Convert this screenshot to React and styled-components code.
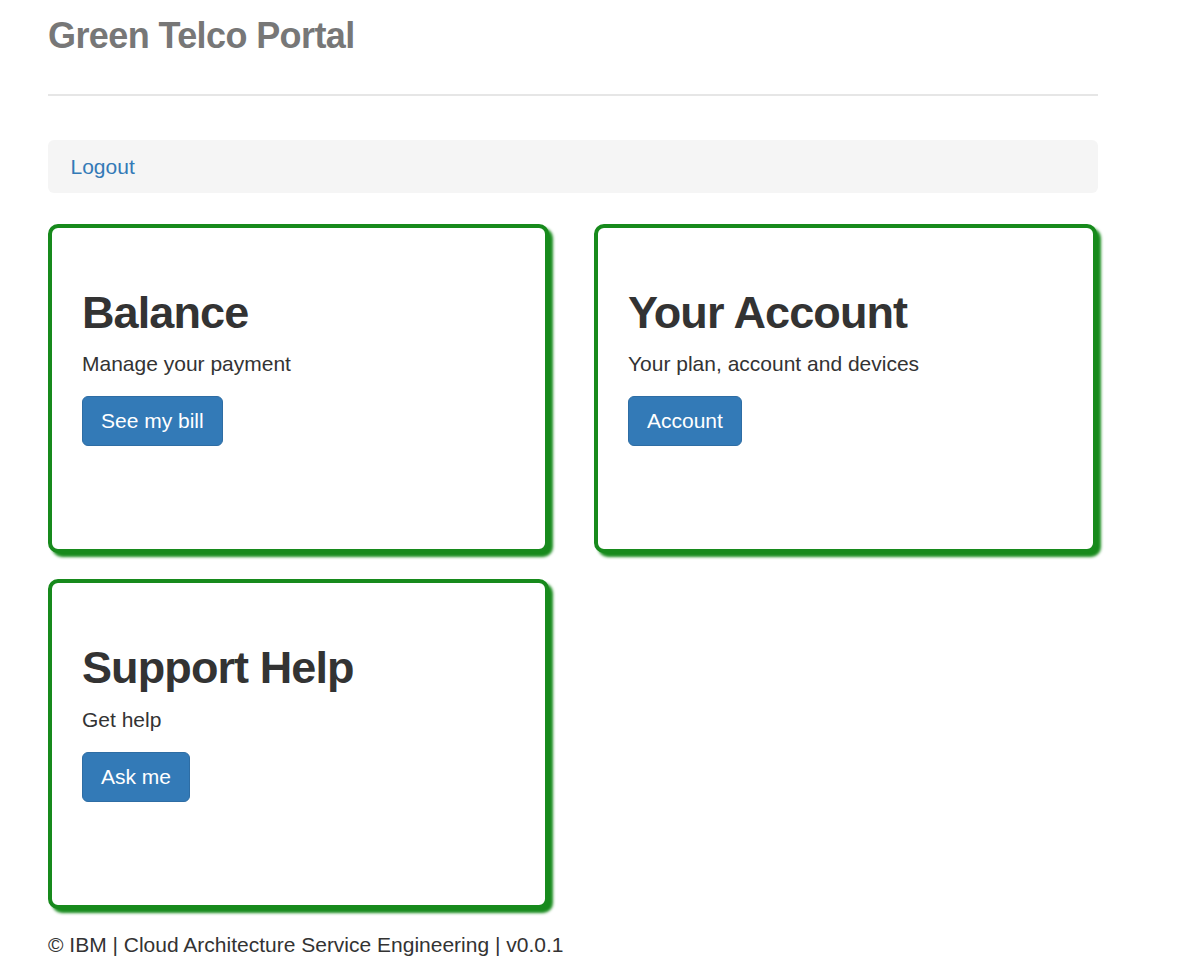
import React from "react";
import styled, { createGlobalStyle } from "styled-components";

const GlobalStyle = createGlobalStyle`
  html, body { margin: 0; padding: 0; background: #fff; }
  body {
    font-family: "Liberation Sans", Arial, Helvetica, sans-serif;
    font-size: 21px;
    line-height: 30px;
    color: #333;
  }
  * { box-sizing: border-box; }
`;

const Page = styled.div`
  width: 1050px;
  margin-left: 48px;
  padding-top: 16px;
`;

const Title = styled.h3`
  margin: 0;
  font-size: 36px;
  line-height: 39.6px;
  font-weight: 700;
  letter-spacing: -0.6px;
  color: #777;
`;

const Rule = styled.hr`
  margin: 38px 0 0;
  border: 0;
  border-top: 2px solid #e6e6e6;
  height: 0;
`;

const Nav = styled.nav`
  margin-top: 44px;
  background: #f5f5f5;
  border-radius: 6px;
  padding: 12px 22.5px;
  height: 53px;
`;

const NavLink = styled.a`
  color: #337ab7;
  text-decoration: none;
  font-size: 21px;
  line-height: 30px;
`;

const Grid = styled.div`
  margin-top: 31px;
  display: grid;
  grid-template-columns: 501px 503px;
  column-gap: 45px;
  row-gap: 26px;
`;

const Card = styled.section`
  border: 4px solid #178a1c;
  border-radius: 10px;
  box-shadow: 4px 4px 3px #178a1c;
  padding: 30px 30px 103px;
  background: #fff;
`;

const CardTitle = styled.h2`
  margin: 30px 0 12px;
  font-size: 45px;
  line-height: 49.5px;
  font-weight: 700;
  letter-spacing: -0.9px;
  color: #333;
`;

const CardText = styled.p`
  margin: 0 0 17px;
  font-size: 21px;
  line-height: 30px;
`;

const Button = styled.button`
  display: inline-block;
  height: 50px;
  padding: 9px 18px;
  font-family: inherit;
  font-size: 21px;
  line-height: 30px;
  color: #fff;
  background: #337ab7;
  border: 1px solid #2e6da4;
  border-radius: 6px;
  cursor: pointer;
`;

const Footer = styled.footer`
  margin-top: 21px;
  font-size: 21px;
  line-height: 30px;
  color: #333;
`;

const cards = [
  { title: "Balance", text: "Manage your payment", action: "See my bill" },
  { title: "Your Account", text: "Your plan, account and devices", action: "Account" },
  { title: "Support Help", text: "Get help", action: "Ask me" },
];

export default function App() {
  return (
    <>
      <GlobalStyle />
      <Page>
        <Title>Green Telco Portal</Title>
        <Rule />
        <Nav>
          <NavLink href="#">Logout</NavLink>
        </Nav>
        <Grid>
          {cards.map((c) => (
            <Card key={c.title}>
              <CardTitle>{c.title}</CardTitle>
              <CardText>{c.text}</CardText>
              <Button>{c.action}</Button>
            </Card>
          ))}
        </Grid>
        <Footer>© IBM | Cloud Architecture Service Engineering | v0.0.1</Footer>
      </Page>
    </>
  );
}
